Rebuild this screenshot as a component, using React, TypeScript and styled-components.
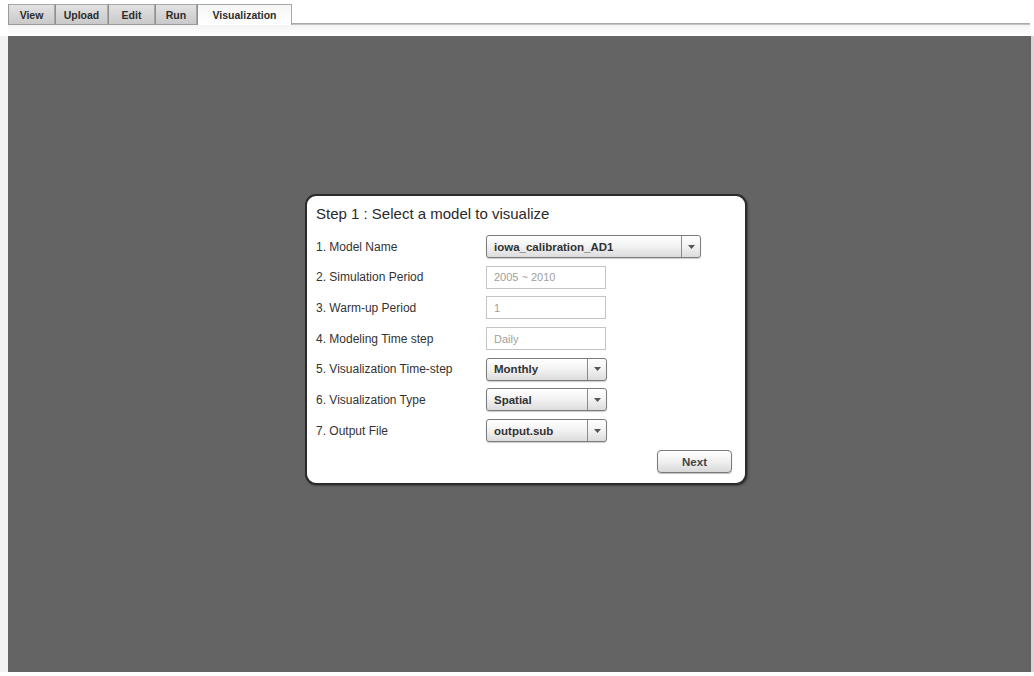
import React from "react";
import styled, { createGlobalStyle } from "styled-components";

const Global = createGlobalStyle`
  html, body { margin: 0; padding: 0; background: #ffffff; }
  body { font-family: "Liberation Sans", Arial, sans-serif; }
  * { box-sizing: border-box; }
`;

const Page = styled.div`
  width: 1034px;
  height: 676px;
  display: flex;
  flex-direction: column;
  background: #ffffff;
  overflow: hidden;
`;

const TabBar = styled.div`
  display: flex;
  align-items: flex-end;
  height: 25px;
  padding-left: 8px;
  padding-right: 4px;
`;

const Tab = styled.div<{ $active?: boolean; $w: number }>`
  width: ${(p) => p.$w}px;
  height: 21px;
  display: flex;
  align-items: center;
  justify-content: center;
  font-size: 10.5px;
  font-weight: bold;
  color: #2c2c2c;
  border: 1px solid #a8a8a8;
  border-left: ${(p) => (p.$active ? "1px solid #a8a8a8" : "1px solid #9a9a9a")};
  border-bottom: ${(p) => (p.$active ? "none" : "1px solid #9a9a9a")};
  background: ${(p) =>
    p.$active
      ? "linear-gradient(#f6f6f6, #ffffff)"
      : "linear-gradient(#e2e2e2, #c9c9c9)"};
  & + & { border-left: 1px solid #8e8e8e; }
`;

const TabRule = styled.div`
  flex: 1;
  height: 2px;
  background: linear-gradient(#9c9c9c, #d0d0d0);
`;

const Band = styled.div`
  height: 11px;
  margin-left: 8px;
  margin-right: 4px;
  background: linear-gradient(#f4f4f4, #ffffff);
`;

const Stage = styled.div`
  display: flex;
  height: 636px;
  background: linear-gradient(90deg, #f2f2f2, #d6d6d6);
  padding-right: 3px;
`;

const Canvas = styled.div`
  flex: 1;
  margin-left: 8px;
  background: #646464;
  padding: 158px 0 0 297px;
`;

const Dialog = styled.div`
  width: 442px;
  height: 291px;
  background: #ffffff;
  border: 2px solid #2b2b2b;
  border-radius: 11px;
  box-shadow: 1px 1px 2px rgba(0, 0, 0, 0.35);
  padding: 8px 13px 0 9px;
  display: flex;
  flex-direction: column;
`;

const Title = styled.div`
  font-size: 15px;
  line-height: 20px;
  color: #2a2a2a;
  margin-bottom: 11px;
`;

const Form = styled.div`
  display: grid;
  grid-template-columns: 170px 1fr;
  grid-auto-rows: 23px;
  row-gap: 7.7px;
`;

const Label = styled.div`
  display: flex;
  align-items: center;
  font-size: 12px;
  color: #333333;
`;

const Field = styled.div`
  width: 120px;
  height: 23px;
  border: 1px solid #c4c4c4;
  display: flex;
  align-items: center;
  padding-left: 7px;
  font-size: 11px;
  color: #a0a0a0;
`;

const Select = styled.div<{ $w: number }>`
  width: ${(p) => p.$w}px;
  height: 23px;
  display: flex;
  border: 1px solid #7c7c7c;
  border-radius: 3px;
  background: linear-gradient(#ffffff, #f2f2f2 50%, #dcdcdc);
  box-shadow: 0 1px 1px rgba(0, 0, 0, 0.2);
`;

const SelectText = styled.div`
  flex: 1;
  display: flex;
  align-items: center;
  padding-left: 7px;
  font-size: 11.5px;
  font-weight: bold;
  color: #333333;
`;

const SelectArrow = styled.div`
  width: 19px;
  border-left: 1px solid #8a8a8a;
  display: flex;
  align-items: center;
  justify-content: center;
`;

const Footer = styled.div`
  display: flex;
  justify-content: flex-end;
  margin-top: 8px;
`;

const Button = styled.div`
  width: 75px;
  height: 23px;
  display: flex;
  align-items: center;
  justify-content: center;
  border: 1px solid #7a7a7a;
  border-radius: 4px;
  background: linear-gradient(#ffffff, #eeeeee 55%, #d8d8d8);
  box-shadow: 0 1px 1px rgba(0, 0, 0, 0.25);
  font-size: 11.5px;
  font-weight: bold;
  color: #444444;
`;

const Caret = () => (
  <svg width="7" height="4" viewBox="0 0 7 4">
    <path d="M0 0 L7 0 L3.5 4 Z" fill="#555" />
  </svg>
);

type Row =
  | { label: string; kind: "field"; value: string }
  | { label: string; kind: "select"; value: string; w: number };

const rows: Row[] = [
  { label: "1. Model Name", kind: "select", value: "iowa_calibration_AD1", w: 215 },
  { label: "2. Simulation Period", kind: "field", value: "2005 ~ 2010" },
  { label: "3. Warm-up Period", kind: "field", value: "1" },
  { label: "4. Modeling Time step", kind: "field", value: "Daily" },
  { label: "5. Visualization Time-step", kind: "select", value: "Monthly", w: 121 },
  { label: "6. Visualization Type", kind: "select", value: "Spatial", w: 121 },
  { label: "7. Output File", kind: "select", value: "output.sub", w: 121 },
];

const tabs = [
  { name: "View", w: 47 },
  { name: "Upload", w: 53 },
  { name: "Edit", w: 47 },
  { name: "Run", w: 42 },
];

export default function App() {
  return (
    <Page>
      <Global />
      <TabBar>
        {tabs.map((t) => (
          <Tab key={t.name} $w={t.w}>
            {t.name}
          </Tab>
        ))}
        <Tab $active $w={95}>
          Visualization
        </Tab>
        <TabRule />
      </TabBar>
      <Band />
      <Stage>
        <Canvas>
          <Dialog>
            <Title>Step 1 : Select a model to visualize</Title>
            <Form>
              {rows.map((r) => (
                <React.Fragment key={r.label}>
                  <Label>{r.label}</Label>
                  {r.kind === "field" ? (
                    <Field>{r.value}</Field>
                  ) : (
                    <Select $w={r.w}>
                      <SelectText>{r.value}</SelectText>
                      <SelectArrow>
                        <Caret />
                      </SelectArrow>
                    </Select>
                  )}
                </React.Fragment>
              ))}
            </Form>
            <Footer>
              <Button>Next</Button>
            </Footer>
          </Dialog>
        </Canvas>
      </Stage>
    </Page>
  );
}
